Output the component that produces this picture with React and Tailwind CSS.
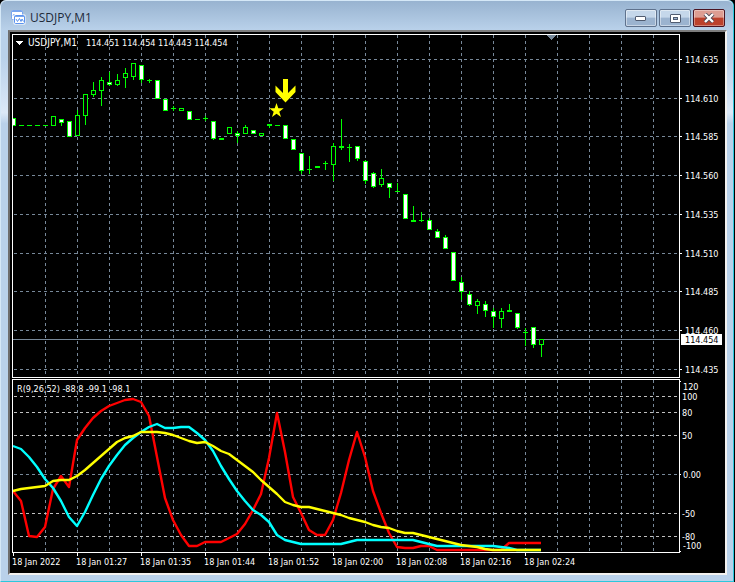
import React from 'react';

// [high, top, bottom, low, kind]  kind: w = filled, h = hollow, d = doji
const CANDLES = [
    [118, 118, 125, 125, 'w'], [125, 125, 125, 125, 'd'], [125, 125, 125, 125, 'd'], [125, 125, 125, 125, 'd'],
    [125, 125, 125, 125, 'd'], [116, 116, 125, 125, 'h'], [119, 119, 122, 125, 'w'], [121, 121, 136, 136, 'w'],
    [110, 115, 135, 135, 'h'], [94, 94, 115, 124, 'h'], [82, 90, 94, 96, 'h'], [77, 80, 90, 105, 'h'],
    [72, 82, 84, 85, 'w'], [74, 80, 84, 85, 'h'], [68, 73, 77, 87, 'h'], [63, 63, 76, 79, 'h'],
    [65, 65, 79, 82, 'w'], [79, 80, 80, 82, 'd'], [80, 80, 98, 98, 'w'], [99, 99, 110, 110, 'w'],
    [106, 108, 108, 110, 'd'], [108, 108, 110, 110, 'h'], [111, 111, 119, 119, 'w'], [119, 119, 119, 119, 'd'],
    [116, 118, 118, 120, 'd'], [121, 121, 138, 139, 'w'], [138, 138, 139, 139, 'd'], [127, 127, 133, 133, 'h'],
    [131, 133, 135, 142, 'w'], [125, 127, 133, 133, 'h'], [130, 130, 133, 133, 'w'], [133, 133, 135, 135, 'h'],
    [124, 124, 125, 127, 'd'], [125, 125, 125, 125, 'd'], [125, 125, 138, 138, 'w'], [139, 139, 149, 149, 'w'],
    [153, 153, 170, 173, 'w'], [156, 169, 169, 173, 'd'], [166, 166, 167, 167, 'd'], [161, 163, 163, 169, 'd'],
    [143, 146, 164, 180, 'h'], [119, 146, 147, 149, 'd'], [144, 147, 147, 161, 'd'], [146, 146, 158, 160, 'w'],
    [160, 161, 180, 183, 'w'], [172, 173, 186, 187, 'w'], [169, 178, 184, 186, 'h'], [183, 183, 187, 197, 'w'],
    [183, 191, 191, 191, 'd'], [194, 194, 218, 218, 'w'], [206, 220, 221, 221, 'd'], [212, 220, 220, 221, 'd'],
    [218, 220, 229, 229, 'w'], [229, 231, 237, 237, 'w'], [235, 237, 248, 248, 'w'], [252, 252, 280, 280, 'w'],
    [277, 282, 291, 299, 'w'], [291, 294, 304, 305, 'w'], [299, 301, 305, 313, 'h'], [301, 304, 310, 316, 'w'],
    [308, 311, 316, 327, 'w'], [308, 311, 318, 327, 'h'], [304, 310, 311, 311, 'd'], [313, 313, 327, 328, 'w'],
    [328, 332, 332, 345, 'd'], [327, 327, 344, 347, 'w'], [339, 339, 344, 356, 'h'],
];

const YELLOW = [491, 489, 488, 487, 486, 481, 480, 480, 476, 470, 463, 456, 449, 442, 438, 436, 432, 432, 432, 433, 435, 438, 441, 443, 442, 446, 451, 454, 460, 466, 472, 480, 487, 494, 502, 505, 507, 507, 509, 511, 513, 515, 518, 520, 522, 525, 527, 528, 531, 533, 533, 535, 537, 539, 541, 543, 545, 546, 547, 549, 550, 550, 550, 550, 550, 550, 550];
const CYAN = [446, 449, 457, 467, 479, 488, 501, 517, 526, 512, 495, 479, 466, 455, 445, 438, 432, 427, 424, 428, 428, 427, 427, 433, 440, 451, 466, 479, 491, 501, 510, 515, 522, 535, 540, 542, 544, 544, 544, 544, 544, 544, 542, 540, 540, 540, 540, 540, 540, 540, 540, 542, 544, 546, 546, 546, 546, 546, 546, 546, 546, 547, 548, 550, 550, 550, 550];
const RED = [491, 501, 536, 537, 527, 489, 476, 487, 440, 428, 418, 411, 406, 403, 400, 399, 402, 416, 457, 498, 520, 535, 546, 546, 542, 542, 542, 538, 534, 524, 510, 494, 458, 413, 452, 497, 513, 530, 535, 535, 520, 493, 460, 432, 457, 491, 513, 533, 547, 548, 548, 546, 546, 550, 550, 550, 550, 550, 550, 550, 550, 550, 543, 543, 543, 543, 543];

const PRICES = [
    ['114.635', 59], ['114.610', 98], ['114.585', 136], ['114.560', 175], ['114.535', 214],
    ['114.510', 253], ['114.485', 291], ['114.460', 330], ['114.435', 369],
];

const LEVELS = [
    ['100', 396, 400], ['80', 412, 416], ['50', 435, 439], ['-50', 513, 517], ['-80', 536, 540],
];

const TIMES = ['18 Jan 2022', '18 Jan 01:27', '18 Jan 01:35', '18 Jan 01:44', '18 Jan 01:52', '18 Jan 02:00', '18 Jan 02:08', '18 Jan 02:16', '18 Jan 02:24'];

const GRID_X = Array.from({ length: 20 }, (_, i) => 45 + i * 32);

const toPoints = (values) => values.map((y, i) => `${13 + i * 8},${y}`).join(' ');

const Candle = ({ x, data }) => {
    const [high, top, bottom, low, kind] = data;
    return (
        <g>
            <rect x={x} y={high} width="1" height={low - high + 1} fill="#00ff00" />
            <rect x={x - 2} y={top} width="5" height={bottom - top + 1} fill="#00ff00" />
            {kind !== 'd' && (
                <rect x={x - 1} y={top + 1} width="3" height={bottom - top - 1} fill={kind === 'w' ? '#ffffff' : '#000000'} />
            )}
        </g>
    );
};

const PricePane = () => (
    <svg viewBox="10 32 715 346" className="block w-full h-auto" shapeRendering="crispEdges" fill="#ffffff">
        <defs>
            <clipPath id="price-area"><rect x="13" y="35" width="666" height="342" /></clipPath>
        </defs>
        <g stroke="#778899" strokeDasharray="3 3">
            {GRID_X.map(x => <line key={x} x1={x + 0.5} x2={x + 0.5} y1="35" y2="378" />)}
            {PRICES.map(([label, y]) => <line key={label} x1="14" x2="679" y1={y + 0.5} y2={y + 0.5} />)}
        </g>
        <rect x="13" y="339" width="666" height="1" fill="#778899" />
        <g clipPath="url(#price-area)">
            {CANDLES.map((c, i) => <Candle key={i} x={13 + i * 8} data={c} />)}
        </g>
        <path d="M546 35h11l-5.500 5z" fill="#778899" />
        <rect x="12.500" y="34.500" width="667" height="343" fill="none" stroke="#ffffff" />

        {/* Signal marks */}
        <g fill="#ffff00" shapeRendering="auto">
            <path d="M283 79h5v14l7.500-7.500v6.500l-10 10.500-10-10.500v-6.500l7.500 7.500z" />
            <path d="M276.500 103l1.800 5.300h5.400l-4.400 3.400 1.700 5.200-4.500-3.200-4.500 3.200 1.700-5.200-4.400-3.400h5.400z" />
        </g>

        <path d="M16 41h7l-3.500 4z" />
        <text x="28" y="46" className="text-[10px]">USDJPY,M1</text>
        <text x="86" y="46" className="text-[9px]">114.451 114.454 114.443 114.454</text>

        {PRICES.map(([label, y]) => (
            <g key={label}>
                <rect x="680" y={y} width="2" height="1" />
                <text x="685" y={y + 4} className="text-[9px]">{label}</text>
            </g>
        ))}
        <rect x="681" y="334" width="41" height="11" />
        <text x="685" y="343" className="text-[9px]" fill="#000000">114.454</text>
    </svg>
);

const IndicatorPane = () => (
    <svg viewBox="10 378 715 195" className="block w-full h-auto" shapeRendering="crispEdges" fill="#ffffff">
        <g strokeDasharray="3 3">
            {GRID_X.map(x => <line key={x} x1={x + 0.5} x2={x + 0.5} y1="380" y2="552" stroke="#778899" />)}
            {LEVELS.map(([label, y]) => <line key={label} x1="14" x2="679" y1={y + 0.5} y2={y + 0.5} stroke="#c0c0c0" />)}
            <line x1="14" x2="679" y1="474.500" y2="474.500" stroke="#778899" />
        </g>
        <g fill="none" strokeWidth="2.400" strokeLinejoin="round" shapeRendering="auto">
            <polyline points={toPoints(RED)} stroke="#ff0000" />
            <polyline points={toPoints(CYAN)} stroke="#00ffff" />
            <polyline points={toPoints(YELLOW)} stroke="#ffff00" />
        </g>
        <rect x="12.500" y="379.500" width="667" height="173" fill="none" stroke="#ffffff" />
        <text x="17" y="392" className="text-[9px]">R(9,26,52) -88.8 -99.1 -98.1</text>

        <rect x="680" y="381" width="1" height="1" />
        <text x="683" y="390" className="text-[9px]">120</text>
        {LEVELS.map(([label, , y]) => <text key={label} x="682" y={y} className="text-[9px]">{label}</text>)}
        <rect x="680" y="474" width="1" height="1" />
        <text x="683" y="478" className="text-[9px]">0.00</text>
        <rect x="680" y="551" width="1" height="1" />
        <text x="683" y="549" className="text-[9px]">-100</text>

        {TIMES.map((time, i) => (
            <g key={time}>
                <rect x={13 + i * 64} y="553" width="1" height="3" />
                <text x={12 + i * 64} y="565" className="text-[9px]">{time}</text>
            </g>
        ))}
    </svg>
);

const ChartIcon = () => (
    <svg width="16" height="16" viewBox="0 0 16 16" className="shrink-0">
        <rect x="0.500" y="0.500" width="11" height="9" rx="1" fill="#ffffff" stroke="#78a5ee" />
        <path d="M1 1.500h10" stroke="#78a5ee" />
        <path d="M2 6l1-2 1 2" fill="none" stroke="#78a5ee" />
        <rect x="2.500" y="4.500" width="12" height="10" rx="1" fill="#ffffff" />
        <rect x="3.500" y="5.500" width="10" height="8" rx="1" fill="#ffffff" stroke="#5b93ee" />
        <path d="M4 6.500h9" stroke="#78a5ee" />
        <path d="M5 9l1.500 2.500L8.500 8.500l1.500 3 1-2.500 1.500 2.500" fill="none" stroke="#5b93ee" />
    </svg>
);

const winButton = 'w-8 h-[18px] rounded-[2px] border border-[#5f728d] bg-linear-to-b from-[#c5d7ea] from-45% to-[#9bb3cf] to-50% flex items-center justify-center shadow-[inset_0_0_0_1px_rgba(255,255,255,0.45)]';
const closeButton = 'w-8 h-[18px] rounded-[2px] border border-[#4b1422] bg-linear-to-b from-[#dd9d92] from-45% to-[#bc412c] to-50% flex items-center justify-center shadow-[inset_0_0_0_1px_rgba(255,255,255,0.35)]';

const App = () => {
    return (
        <div className="min-h-screen bg-black">
            <div className="rounded-t-md border-x border-b border-[#2cc7dc] border-l-[#d5e8f7] bg-[#b9d1ea] mr-px font-['Open_Sans',sans-serif]">
                {/* Title bar */}
                <div className="h-[30px] rounded-t-md border-t border-[#d5e8f7] bg-linear-to-b from-[#98b3d0] to-[#b9d1ea] pl-2.5 pr-2 pt-[5px] flex items-center justify-between">
                    <div className="flex items-center gap-[3px]">
                        <ChartIcon />
                        <h1 className="text-xs leading-4 text-[#1e2a3a]">USDJPY,M1</h1>
                    </div>
                    <div className="flex gap-0.5">
                        <button className={winButton} aria-label="Minimize">
                            <svg width="12" height="6" viewBox="0 0 12 6"><rect x="0.500" y="1.500" width="10" height="4" rx="0.500" fill="#fff" stroke="#515c70" /></svg>
                        </button>
                        <button className={winButton} aria-label="Maximize">
                            <svg width="11" height="9" viewBox="0 0 11 9"><rect x="0.500" y="0.500" width="10" height="8" rx="0.500" fill="#fff" stroke="#515c70" /><rect x="3.500" y="3.500" width="4" height="2" fill="#9bb3cf" stroke="#515c70" /></svg>
                        </button>
                        <button className={closeButton} aria-label="Close">
                            <svg width="12" height="10" viewBox="0 0 12 10"><path d="M2 1l8 8M10 1l-8 8" stroke="#4f4855" strokeWidth="4" /><path d="M2 1l8 8M10 1l-8 8" stroke="#fff" strokeWidth="2.400" /></svg>
                        </button>
                    </div>
                </div>

                {/* Chart */}
                <div className="bg-linear-to-b from-[#b9d1ea] from-5% via-[#dce9f7] via-15% to-[#b9d1ea] to-17% pl-[7px] pr-1.5 pb-1.5">
                    <div className="border-2 border-[#f2f1ef] border-t-[#7d7d7d] border-l-[#6d6d6d] bg-black font-['DejaVu_Sans_Condensed','DejaVu_Sans',sans-serif]">
                        <PricePane />
                        <IndicatorPane />
                    </div>
                </div>
            </div>
        </div>
    );
};

export default App;
